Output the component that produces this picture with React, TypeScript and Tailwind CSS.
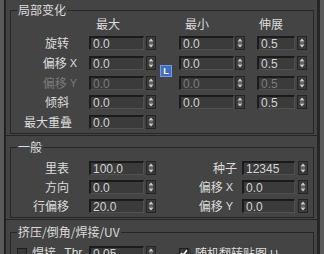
import React from "react";

const CJK = '"Noto Sans CJK SC", "Noto Sans", sans-serif';
const LAT = '"Liberation Sans", Arial, sans-serif';

function Spinner() {
  return (
    <div className="w-[10px] h-[14px] bg-[#3a3a3a] border border-[#242424] flex items-center justify-center shrink-0">
      <svg width="8" height="12" viewBox="0 0 8 12">
        <path d="M4 1.5 L6.5 4.5 H1.5 Z" fill="#cfcfcf" />
        <rect x="2" y="5.5" width="4" height="1" fill="#8a8a8a" />
        <path d="M1.5 7.5 H6.5 L4 10.5 Z" fill="#cfcfcf" />
      </svg>
    </div>
  );
}

function Field({ value, w, dim }: { value: string; w: string; dim?: boolean }) {
  return (
    <div
      className={`${w} h-[14px] shrink-0 bg-[#3b3b3b] border-t-2 border-l-2 border-r border-b border-t-[#1b1b1b] border-l-[#1b1b1b] border-r-[#505050] border-b-[#505050] flex items-center pl-[2px] text-[12px] leading-none ${dim ? "text-[#7d7d7d]" : "text-[#d4d4d4]"}`}
      style={{ fontFamily: LAT }}
    >
      {value}
    </div>
  );
}

function Label({ children, pr, dim }: { children: React.ReactNode; pr: string; dim?: boolean }) {
  return (
    <div
      className={`w-[78px] shrink-0 flex justify-end items-center ${pr} text-[12px] leading-[14px] ${dim ? "text-[#7a7a7a]" : "text-[#dcdcdc]"}`}
    >
      {children}
    </div>
  );
}

function XY({ t, axis }: { t: string; axis: string }) {
  return (
    <>
      <span>{t}</span>
      <span className="ml-[3px] text-[11px]" style={{ fontFamily: LAT }}>
        {axis}
      </span>
    </>
  );
}

function Check({ checked }: { checked?: boolean }) {
  return (
    <div className="w-[10px] h-[10px] shrink-0 bg-[#3a3a3a] border border-[#1e1e1e] flex items-center justify-center">
      {checked && (
        <svg width="8" height="8" viewBox="0 0 8 8">
          <path d="M1 4 L3 6.3 L7 1.2" stroke="#f0f0f0" strokeWidth="1.6" fill="none" />
        </svg>
      )}
    </div>
  );
}

const legendCls = "ml-[6px] px-[1px] text-[12px] leading-[14px] text-[#dcdcdc]";
const fsCls = "border border-[#262626] ml-[4px] mr-[3px] min-w-0";

export default function App() {
  const leftRows = [
    { label: "旋转", pr: "pr-[20px]", v: "0.0", mt: "mt-0" },
    { label: <XY t="偏移" axis="X" />, pr: "pr-[12px]", v: "0.0", mt: "mt-[6px]" },
    { label: <XY t="偏移" axis="Y" />, pr: "pr-[12px]", v: "0.0", mt: "mt-[6px]", dim: true },
    { label: "倾斜", pr: "pr-[20px]", v: "0.0", mt: "mt-[5px]" },
    { label: "最大重叠", pr: "pr-[17px]", v: "0.0", mt: "mt-[6px]" },
  ];
  const rightRows = [
    { a: "0.0", b: "0.5", mt: "mt-0" },
    { a: "0.0", b: "0.5", mt: "mt-[6px]" },
    { a: "0.0", b: "0.5", mt: "mt-[6px]", dim: true },
    { a: "0.0", b: "0.5", mt: "mt-[5px]" },
  ];
  return (
    <div className="w-[324px] h-[254px] bg-[#444444] overflow-hidden flex" style={{ fontFamily: CJK }}>
      <div className="w-[4px] h-full bg-[#5a5a5a] shrink-0" />
      <div className="w-[1px] h-full bg-[#1e1e1e] shrink-0" />
      <div className="w-[313px] shrink-0 flex flex-col">
        {/* Section A */}
        <div className="border-l border-r border-b border-[#262626] pb-[1px]">
          <fieldset className={`${fsCls} mt-[3px] pb-[4px]`}>
            <legend className={legendCls}>局部变化</legend>
            <div className="flex h-[14px] items-center text-[12px] leading-[14px] text-[#dcdcdc]">
              <span className="ml-[85px] w-[24px]">最大</span>
              <span className="ml-[65px] w-[24px]">最小</span>
              <span className="ml-[50px] w-[24px]">伸展</span>
            </div>
            <div className="flex mt-[5px]">
              <div className="flex flex-col">
                {leftRows.map((r, i) => (
                  <div key={i} className={`flex h-[14px] items-center ${r.mt}`}>
                    <Label pr={r.pr} dim={r.dim}>
                      {r.label}
                    </Label>
                    <Field value={r.v} w="w-[55px]" dim={r.dim} />
                    <div className="ml-[2px]">
                      <Spinner />
                    </div>
                  </div>
                ))}
              </div>
              <div className="ml-[4px] w-[12px] pt-[29px]">
                <div
                  className="w-[12px] h-[12px] bg-[#3d6fc9] border border-[#6f9be0] flex items-center justify-center text-white text-[9px] font-bold leading-none"
                  style={{ fontFamily: LAT }}
                >
                  L
                </div>
              </div>
              <div className="ml-[7px] flex flex-col">
                {rightRows.map((r, i) => (
                  <div key={i} className={`flex h-[14px] items-center ${r.mt}`}>
                    <Field value={r.a} w="w-[55px]" dim={r.dim} />
                    <div className="ml-[1px]">
                      <Spinner />
                    </div>
                    <div className="ml-[12px]">
                      <Field value={r.b} w="w-[38px]" dim={r.dim} />
                    </div>
                    <div className="ml-[2px]">
                      <Spinner />
                    </div>
                  </div>
                ))}
              </div>
            </div>
          </fieldset>
        </div>

        {/* Section B */}
        <div className="border-l border-r border-b border-[#262626] pt-[4px] pb-[1px]">
          <fieldset className={`${fsCls} pb-[4px]`}>
            <legend className={legendCls}>一般</legend>
            {[
              { l: "里表", v: "100.0", rl: <span>种子</span>, rpr: "pr-[5px]", rv: "12345", mt: "mt-[7px]" },
              { l: "方向", v: "0.0", rl: <XY t="偏移" axis="X" />, rpr: "pr-[9px]", rv: "0.0", mt: "mt-[5px]" },
              { l: "行偏移", v: "20.0", rl: <XY t="偏移" axis="Y" />, rpr: "pr-[9px]", rv: "0.0", mt: "mt-[5px]" },
            ].map((r, i) => (
              <div key={i} className={`flex h-[14px] items-center ${r.mt}`}>
                <Label pr="pr-[20px]">{r.l}</Label>
                <Field value={r.v} w="w-[55px]" />
                <div className="ml-[2px]">
                  <Spinner />
                </div>
                <div
                  className={`w-[86px] shrink-0 flex justify-end items-center ${r.rpr} text-[12px] leading-[14px] text-[#dcdcdc]`}
                >
                  {r.rl}
                </div>
                <Field value={r.rv} w="w-[53px]" />
                <div className="ml-[3px]">
                  <Spinner />
                </div>
              </div>
            ))}
          </fieldset>
        </div>

        {/* Section C */}
        <div className="border-l border-r border-[#262626] pt-[5px] flex-1">
          <fieldset className={`${fsCls} h-[60px]`}>
            <legend className={legendCls}>挤压/倒角/焊接/UV</legend>
            <div className="flex h-[14px] items-center mt-[7px]">
              <div className="w-[78px] shrink-0 flex items-center">
                <div className="ml-[6px]">
                  <Check />
                </div>
                <span className="ml-[5px] text-[12px] leading-[14px] text-[#dcdcdc]">焊接</span>
                <span className="ml-auto mr-[4px] text-[12px] leading-[14px] text-[#dcdcdc]" style={{ fontFamily: LAT }}>
                  Thr.
                </span>
              </div>
              <Field value="0.05" w="w-[55px]" />
              <div className="ml-[2px]">
                <Spinner />
              </div>
              <div className="ml-[23px]">
                <Check checked />
              </div>
              <span className="ml-[6px] text-[12px] leading-[14px] text-[#dcdcdc] whitespace-nowrap">
                随机翻转贴图<span className="ml-[3px] text-[11px]" style={{ fontFamily: LAT }}>U</span>
              </span>
            </div>
          </fieldset>
        </div>
      </div>
      <div className="w-[2px] h-full bg-[#262626] shrink-0" />
      <div className="flex-1 h-full bg-[#5a5a5a]" />
    </div>
  );
}
